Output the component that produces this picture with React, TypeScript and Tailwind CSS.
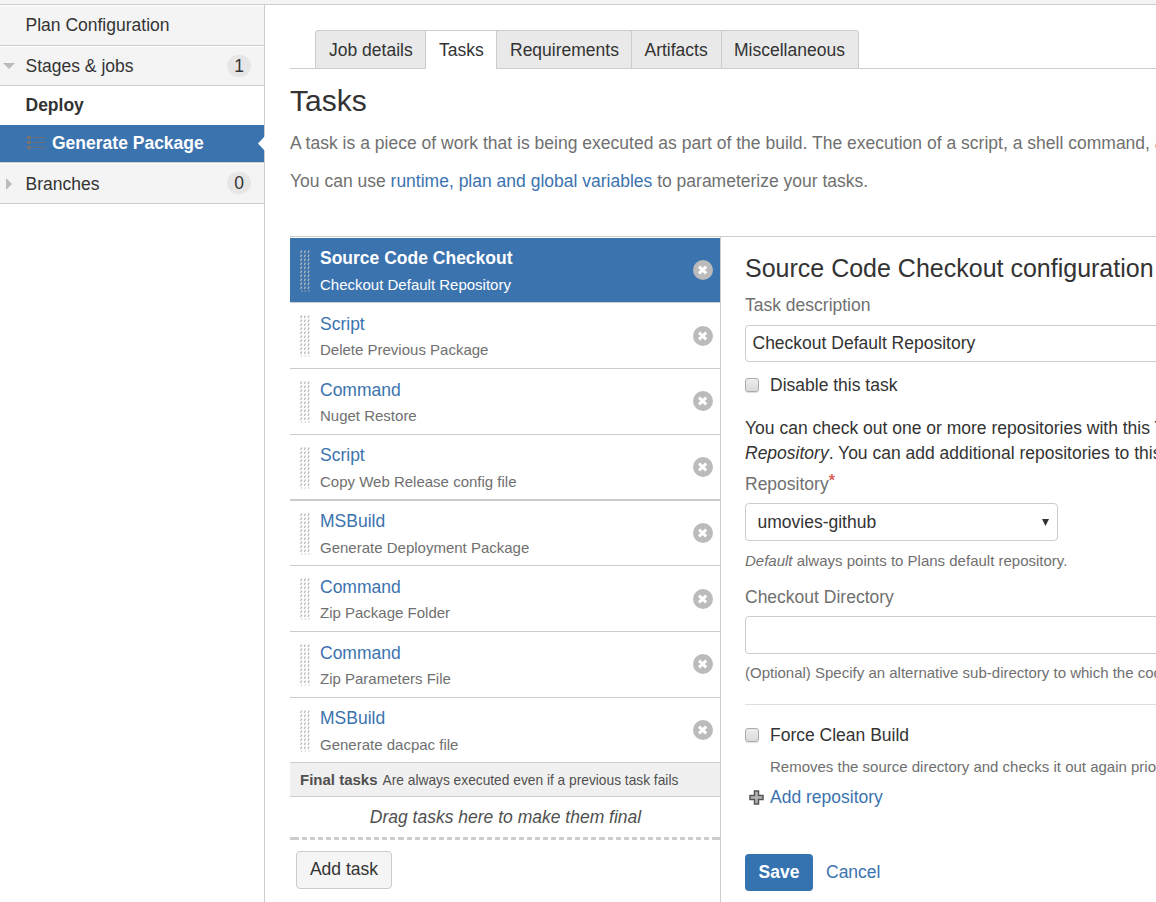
import React from "react";

type Task = { name: string; detail: string; row: string; title: string; sub: string; icon: string };

const tasks: Task[] = [
  { name: "Script", detail: "Delete Previous Package", row: "h-[66px] border-b", title: "mt-[9px]", sub: "mt-[2px]", icon: "mt-[23px]" },
  { name: "Command", detail: "Nuget Restore", row: "h-[66px] border-b", title: "mt-[9px]", sub: "mt-[2px]", icon: "mt-[22px]" },
  { name: "Script", detail: "Copy Web Release config file", row: "h-[66px] border-b-2", title: "mt-[8px]", sub: "mt-[3px]", icon: "mt-[22px]" },
  { name: "MSBuild", detail: "Generate Deployment Package", row: "h-[65px] border-b", title: "mt-[8px]", sub: "mt-[3px]", icon: "mt-[22px]" },
  { name: "Command", detail: "Zip Package Folder", row: "h-[66px] border-b", title: "mt-[9px]", sub: "mt-[2px]", icon: "mt-[23px]" },
  { name: "Command", detail: "Zip Parameters File", row: "h-[66px] border-b", title: "mt-[9px]", sub: "mt-[2px]", icon: "mt-[22px]" },
  { name: "MSBuild", detail: "Generate dacpac file", row: "h-[65px] border-b", title: "mt-[8px]", sub: "mt-[3px]", icon: "mt-[22px]" },
];

function Grip() {
  const dots: React.ReactElement[] = [];
  for (let r = 0; r < 10; r++) {
    for (let c = 0; c < 3; c++) {
      dots.push(<path key={`${r}-${c}`} d={`M${c * 3.7 + 0.6} ${r * 4 + 3}L${c * 3.7 + 1.7} ${r * 4 + 0.6}`} />);
    }
  }
  return (
    <svg className="ml-[10px] mt-[12px] h-[42px] w-[10px] shrink-0" viewBox="0 0 10 42" stroke="#b9b9b9" strokeWidth="1.3">
      {dots}
      <path d="M1 41h1.200M4.700 41h1.200M8.400 41h1.200" strokeWidth="1" />
    </svg>
  );
}

function Remove({ className }: { className: string }) {
  return (
    <svg className={`mr-[7px] size-5 shrink-0 ${className}`} viewBox="0 0 20 20">
      <circle cx="10" cy="10" r="10" fill="#bbb" />
      <path d="M6 6.700L13.200 13.300M13.200 6.700L6 13.300" stroke="#fff" strokeWidth="3" />
    </svg>
  );
}

function Checkbox() {
  return (
    <span className="mb-[2px] size-[14px] shrink-0 rounded-[3px] border border-[#ababab] bg-linear-to-b from-[#eee] to-[#dadada] shadow-[0_1px_1px_#ddd]" />
  );
}

const link = "text-[#3b73af]";

export default function App() {
  return (
    <div className="flex h-[902px] w-[1156px] flex-col overflow-hidden bg-white font-['Liberation_Sans',Arial,sans-serif] text-[17.5px] leading-[25px] text-[#333]">
      <div className="h-[5px] shrink-0 border-b border-[#ccc] bg-[#f4f4f4]" />
      <div className="flex min-h-0 flex-1">
        <aside className="flex w-[265px] shrink-0 flex-col border-r border-[#ccc]">
          <div className="flex h-[41px] items-center border-t border-b border-t-white border-b-[#ccc] bg-[#f4f4f4] pl-[25.5px]">Plan Configuration</div>
          <div className="flex h-10 items-center border-t border-b border-t-white border-b-[#ccc] bg-[#f4f4f4] pr-[13px]">
            <svg className="ml-[3px] mr-[10.5px] h-[6px] w-3" viewBox="0 0 12 6"><path d="M0 0H12L6 6Z" fill="#bbb" /></svg>
            <span className="flex-1">Stages &amp; jobs</span>
            <span className="h-[22px] w-6 rounded-full bg-[#e6e6e6] text-center leading-[22px]">1</span>
          </div>
          <div className="flex h-[39px] items-center pl-[25.5px] font-bold">Deploy</div>
          <div className="relative flex h-[37px] items-center bg-[#3b73af] pl-[27px] font-bold text-white">
            <svg className="mr-[7px] mb-[2px] h-[15px] w-[18px] shrink-0" viewBox="0 0 18 15" shapeRendering="crispEdges">
              <path d="M0 1h4v3H0zM0 6h4v3H0zM0 11h4v3H0z" fill="#77716f" />
              <path d="M6 2h12v1H6zM6 7h12v1H6zM6 12h12v1H6z" fill="#6b7078" />
            </svg>
            Generate Package
            <svg className="absolute -right-px top-[11px] h-[15px] w-[7px]" viewBox="0 0 7 15"><path d="M7 0L0 7.500L7 15Z" fill="#fff" /></svg>
          </div>
          <div className="h-px bg-[#ccc]" />
          <div className="flex h-[41px] items-center border-t border-b border-t-white border-b-[#ccc] bg-[#f4f4f4] pr-[13px]">
            <svg className="ml-[6px] mr-[13.5px] h-3 w-[6px]" viewBox="0 0 6 12"><path d="M0 0V12L6 6Z" fill="#bbb" /></svg>
            <span className="flex-1 pt-px">Branches</span>
            <span className="mb-px h-[22px] w-6 rounded-full bg-[#e6e6e6] text-center leading-[22px]">0</span>
          </div>
        </aside>

        <main className="ml-[25px] flex min-w-0 flex-1 flex-col whitespace-nowrap">
          <nav className="mt-[25px] flex h-[39px] shrink-0 leading-[38px]">
            <div className="w-[25px] border-b border-[#ccc]" />
            <div className="w-[111px] rounded-tl-[3px] border border-[#ccc] bg-[#e9e9e9] pl-[13px]">Job details</div>
            <div className="w-[70px] border-t border-[#ccc] pl-[13px]">Tasks</div>
            <div className="w-[135px] border border-r-0 border-[#ccc] bg-[#e9e9e9] pl-[13px]">Requirements</div>
            <div className="w-[90px] border border-r-0 border-[#ccc] bg-[#e9e9e9] pl-[12.5px]">Artifacts</div>
            <div className="w-[138px] rounded-tr-[3px] border border-[#ccc] bg-[#e9e9e9] pl-[12px]">Miscellaneous</div>
            <div className="flex-1 border-b border-[#ccc]" />
          </nav>
          <h1 className="mt-[14px] shrink-0 text-[30px] leading-[36px]">Tasks</h1>
          <p className="mt-[12px] shrink-0 tracking-[0.012px] text-[#707070]">A task is a piece of work that is being executed as part of the build. The execution of a script, a shell command, an Ant task</p>
          <p className="mt-[13px] shrink-0 text-[#707070]">You can use <a className={link}>runtime, plan and global variables</a> to parameterize your tasks.</p>

          <div className="mt-[42px] flex min-h-0 flex-1 border-t border-[#ccc]">
            <section className="flex w-[431px] shrink-0 flex-col border-r border-[#ccc] pt-px">
              <div className="flex h-[65px] shrink-0 border-b border-[#ccc] bg-[#3b73af] text-white">
                <Grip />
                <div className="ml-[10px] flex-1">
                  <div className="mt-[8px] font-bold">Source Code Checkout</div>
                  <div className="mt-[3px] text-[15px] leading-[21px]">Checkout Default Repository</div>
                </div>
                <Remove className="mt-[22px]" />
              </div>
              {tasks.map((t, i) => (
                <div key={i} className={`flex shrink-0 border-[#ccc] ${t.row}`}>
                  <Grip />
                  <div className="ml-[10px] flex-1">
                    <div className={`${t.title} ${link}`}>{t.name}</div>
                    <div className={`text-[15px] leading-[21px] text-[#707070] ${t.sub}`}>{t.detail}</div>
                  </div>
                  <Remove className={t.icon} />
                </div>
              ))}
              <div className="flex h-[34px] shrink-0 items-center border-b border-[#ccc] bg-[#f0f0f0] pl-[10px] text-[15px] text-[#505050]">
                <b>Final tasks</b>
                <span className="ml-[5px] pt-px text-[13.75px]">Are always executed even if a previous task fails</span>
              </div>
              <div className="h-[40px] shrink-0 pt-[8px] pl-px text-center italic text-[#505050]">Drag tasks here to make them final</div>
              <div className="flex h-[3px] shrink-0">
                <div className="w-[9px] bg-[#ccc]" />
                <div className="flex-1 bg-[repeating-linear-gradient(90deg,#fff_0_3px,#ccc_3px_8.04px)]" />
                <div className="w-2 bg-[#ccc]" />
              </div>
              <button className="mt-[11px] ml-[6px] h-[38px] w-24 shrink-0 rounded-[4px] border border-[#ccc] bg-[#f5f5f5] pb-[2px]">Add task</button>
            </section>

            <section className="ml-6 flex min-w-0 flex-1 flex-col">
              <h2 className="mt-[16px] text-[25px] leading-[30px]">Source Code Checkout configuration</h2>
              <label className="mt-[10px] text-[#707070]">Task description</label>
              <div className="mt-[7px] h-[37px] w-[460px] shrink-0 rounded-[4px] border border-[#ccc] pl-[6.5px] leading-[34px]">Checkout Default Repository</div>
              <div className="mt-[11px] flex items-center gap-[11px]"><Checkbox />Disable this task</div>
              <p className="mt-[18px]">You can check out one or more repositories with this Task.</p>
              <p><i>Repository</i>. You can add additional repositories to this task</p>
              <label className="mt-[6px] flex text-[#707070]">Repository<span className="-mt-[4px] text-[16px] font-bold text-[#e0635a]">*</span></label>
              <div className="mt-[6px] flex h-[38px] w-[313px] shrink-0 items-center justify-between rounded-[4px] border border-[#ccc] pr-2 pl-[11.5px]">
                <span className="pt-px">umovies-github</span>
                <svg className="h-[7px] w-[7px]" viewBox="0 0 7 7"><path d="M0 0H7L3.500 7Z" fill="#333" /></svg>
              </div>
              <p className="mt-[9px] text-[15px] leading-[21px] text-[#707070]"><i>Default</i> always points to Plans default repository.</p>
              <label className="mt-[14px] text-[#707070]">Checkout Directory</label>
              <div className="mt-[6px] h-[38px] w-[460px] shrink-0 rounded-[4px] border border-[#ccc]" />
              <p className="mt-[8px] text-[15px] leading-[21px] text-[#707070]">(Optional) Specify an alternative sub-directory to which the code</p>
              <div className="mt-[21px] h-px shrink-0 bg-[#ddd]" />
              <div className="mt-[18px] flex items-center gap-[11px]"><Checkbox />Force Clean Build</div>
              <p className="mt-[8px] ml-[25px] text-[15px] leading-[21px] text-[#707070]">Removes the source directory and checks it out again prior</p>
              <div className={`mt-[8px] flex items-center ${link}`}>
                <svg className="ml-1 mr-[6px] size-[15px]" viewBox="0 0 15 15"><path d="M5.500 1h4v4.500h4.500v4h-4.500v4.500h-4v-4.500H1v-4h4.500z" fill="#b5b5b5" stroke="#555" strokeWidth="1.5" /></svg>
                Add repository
              </div>
              <div className="mt-[44px] flex items-center">
                <button className="h-[37px] w-[68px] rounded-[4px] bg-[#3572b0] pb-px font-bold text-white">Save</button>
                <a className={`ml-[13px] ${link}`}>Cancel</a>
              </div>
            </section>
          </div>
        </main>
      </div>
    </div>
  );
}
